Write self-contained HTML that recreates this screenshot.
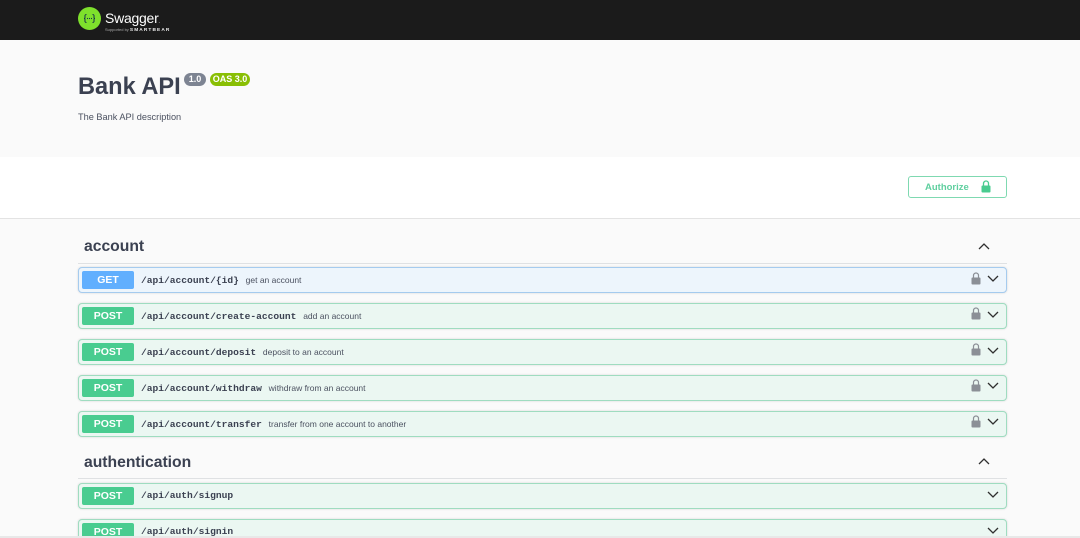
<!DOCTYPE html>
<html><head><meta charset="utf-8"><style>
html,body{margin:0;padding:0;width:1080px;height:538px;overflow:hidden;background:#fafafa;font-family:"Liberation Sans",sans-serif;color:#3b4151}
#w{position:relative;width:1080px;height:538px;overflow:hidden;background:#fafafa;filter:blur(.35px)}
.a{position:absolute}
.top{left:0;top:0;width:1080px;height:40px;background:#1b1b1b}
.white{left:0;top:157px;width:1080px;height:61px;background:#fff;border-bottom:1px solid #e3e3e3}
.row{position:absolute;left:78px;width:927px;height:24px;border:1px solid #9fdcc0;border-radius:4px;background:#ebf7f2;box-shadow:0 0 2px rgba(0,0,0,.15)}
.row.get{border-color:#a5cbee;background:#edf5fc}
.m{position:absolute;left:3px;top:3px;width:52px;height:18px;border-radius:2px;background:#49cc90;color:#fff;font-weight:700;font-size:10.5px;line-height:18px;text-align:center}
.get .m{background:#61affe}
.p{position:absolute;left:62px;top:0;font:700 9.6px/24px "Liberation Mono",monospace;color:#3b4151;white-space:nowrap}
.d{font:400 8.5px/24px "Liberation Sans",sans-serif;color:#4b5160;margin-left:1px}
.h{position:absolute;left:84px;font-weight:700;font-size:15.7px;line-height:20px;color:#3b4151}
.ln{position:absolute;left:78px;width:929px;height:1px;background:#dfe1e3}
svg{position:absolute;overflow:visible}
</style></head><body><div id="w">
<div class="a top"></div>
<svg style="left:78px;top:7px" width="23" height="23" viewBox="0 0 23 23"><circle cx="11.5" cy="11.5" r="11.5" fill="#7ee02c"/><path d="M8.5 7.5c-2 0-1.5 1.5-1.5 3 0 .8-.5 1-1 1 .5 0 1 .3 1 1 0 1.500-.5 3 1.500 3M14.500 7.500c2 0 1.500 1.500 1.500 3 0 .8.5 1 1 1-.5 0-1 .3-1 1 0 1.500.5 3-1.500 3" fill="none" stroke="#173646" stroke-width="1"/><circle cx="9.500" cy="11.500" r=".6" fill="#173646"/><circle cx="11.500" cy="11.500" r=".6" fill="#173646"/><circle cx="13.500" cy="11.500" r=".6" fill="#173646"/></svg>
<div class="a" style="left:105px;top:9px;font-size:14px;line-height:19px;color:#fff;letter-spacing:-.25px">Swagger<span style="font-size:5px">.</span></div>
<div class="a" style="left:105px;top:27px;font-size:4px;line-height:6px;color:#aaa;white-space:nowrap">Supported by <b style="font-size:4.8px;letter-spacing:1.1px;color:#eee">SMARTBEAR</b></div>

<div class="a" style="left:78px;top:72px;font-weight:700;font-size:23.6px;line-height:30px;color:#3b4151">Bank API</div>
<div class="a" style="left:184px;top:73px;width:22px;height:13px;border-radius:7px;background:#7d8492;color:#fff;font-weight:700;font-size:9px;line-height:13.5px;text-align:center">1.0</div>
<div class="a" style="left:210px;top:73px;width:40px;height:13px;border-radius:7px;background:#89bf04;color:#fff;font-weight:700;font-size:9px;line-height:13.5px;text-align:center">OAS 3.0</div>
<div class="a" style="left:78px;top:112px;font-size:9.2px;line-height:11px;color:#4b5160">The Bank API description</div>

<div class="a white"></div>
<div class="a" style="left:908px;top:176px;width:97px;height:20px;border:1.5px solid #7fd9b1;border-radius:3px;background:#fff"></div>
<div class="a" style="left:925px;top:181.5px;font-weight:700;font-size:9.5px;line-height:12px;color:#5fcf9f">Authorize</div>
<svg style="left:981px;top:180px" width="10" height="13" viewBox="0 0 10 13"><path d="M2.500 6V3.500a2.500 2.500 0 0 1 5 0V6" fill="none" stroke="#49cc90" stroke-width="1.300"/><rect x="0.500" y="5.500" width="9" height="7" rx="1" fill="#49cc90"/></svg>

<div class="h" style="top:237px">account</div>
<svg style="left:978px;top:242px" width="12" height="8" viewBox="0 0 12 8"><path d="M1 7l5-5 5 5" fill="none" stroke="#2f2f2f" stroke-width="1.300"/></svg>
<div class="ln" style="top:263px"></div>

<div class="row get" style="top:267px"><div class="m">GET</div><div class="p">/api/account/{id} <span class="d">get an account</span></div></div>
<div class="row" style="top:303px"><div class="m">POST</div><div class="p">/api/account/create-account <span class="d">add an account</span></div></div>
<div class="row" style="top:339px"><div class="m">POST</div><div class="p">/api/account/deposit <span class="d">deposit to an account</span></div></div>
<div class="row" style="top:375px"><div class="m">POST</div><div class="p">/api/account/withdraw <span class="d">withdraw from an account</span></div></div>
<div class="row" style="top:411px"><div class="m">POST</div><div class="p">/api/account/transfer <span class="d">transfer from one account to another</span></div></div>

<svg style="left:971px;top:272px" width="10" height="13" viewBox="0 0 10 13"><path d="M2.500 6V3.500a2.500 2.500 0 0 1 5 0V6" fill="none" stroke="#8b8f96" stroke-width="1.200"/><rect x="0.500" y="5.500" width="9" height="7" rx="1" fill="#8b8f96"/></svg>
<svg style="left:971px;top:307px" width="10" height="13" viewBox="0 0 10 13"><path d="M2.500 6V3.500a2.500 2.500 0 0 1 5 0V6" fill="none" stroke="#8b8f96" stroke-width="1.200"/><rect x="0.500" y="5.500" width="9" height="7" rx="1" fill="#8b8f96"/></svg>
<svg style="left:971px;top:343px" width="10" height="13" viewBox="0 0 10 13"><path d="M2.500 6V3.500a2.500 2.500 0 0 1 5 0V6" fill="none" stroke="#8b8f96" stroke-width="1.200"/><rect x="0.500" y="5.500" width="9" height="7" rx="1" fill="#8b8f96"/></svg>
<svg style="left:971px;top:379px" width="10" height="13" viewBox="0 0 10 13"><path d="M2.500 6V3.500a2.500 2.500 0 0 1 5 0V6" fill="none" stroke="#8b8f96" stroke-width="1.200"/><rect x="0.500" y="5.500" width="9" height="7" rx="1" fill="#8b8f96"/></svg>
<svg style="left:971px;top:415px" width="10" height="13" viewBox="0 0 10 13"><path d="M2.500 6V3.500a2.500 2.500 0 0 1 5 0V6" fill="none" stroke="#8b8f96" stroke-width="1.200"/><rect x="0.500" y="5.500" width="9" height="7" rx="1" fill="#8b8f96"/></svg>

<svg style="left:987px;top:275px" width="12" height="8" viewBox="0 0 12 8"><path d="M1 1l5 5 5-5" fill="none" stroke="#2f2f2f" stroke-width="1.300"/></svg>
<svg style="left:987px;top:311px" width="12" height="8" viewBox="0 0 12 8"><path d="M1 1l5 5 5-5" fill="none" stroke="#2f2f2f" stroke-width="1.300"/></svg>
<svg style="left:987px;top:347px" width="12" height="8" viewBox="0 0 12 8"><path d="M1 1l5 5 5-5" fill="none" stroke="#2f2f2f" stroke-width="1.300"/></svg>
<svg style="left:987px;top:382px" width="12" height="8" viewBox="0 0 12 8"><path d="M1 1l5 5 5-5" fill="none" stroke="#2f2f2f" stroke-width="1.300"/></svg>
<svg style="left:987px;top:418px" width="12" height="8" viewBox="0 0 12 8"><path d="M1 1l5 5 5-5" fill="none" stroke="#2f2f2f" stroke-width="1.300"/></svg>

<div class="h" style="top:452.5px">authentication</div>
<svg style="left:978px;top:457px" width="12" height="8" viewBox="0 0 12 8"><path d="M1 7l5-5 5 5" fill="none" stroke="#2f2f2f" stroke-width="1.300"/></svg>
<div class="ln" style="top:478px"></div>

<div class="row" style="top:483px"><div class="m">POST</div><div class="p">/api/auth/signup</div></div>
<div class="row" style="top:519px"><div class="m">POST</div><div class="p">/api/auth/signin</div></div>
<svg style="left:987px;top:491px" width="12" height="8" viewBox="0 0 12 8"><path d="M1 1l5 5 5-5" fill="none" stroke="#2f2f2f" stroke-width="1.300"/></svg>
<svg style="left:987px;top:527px" width="12" height="8" viewBox="0 0 12 8"><path d="M1 1l5 5 5-5" fill="none" stroke="#2f2f2f" stroke-width="1.300"/></svg>
<div class="a" style="left:0;top:536px;width:1080px;height:2px;background:#e8e8e8"></div>
</div></body></html>
